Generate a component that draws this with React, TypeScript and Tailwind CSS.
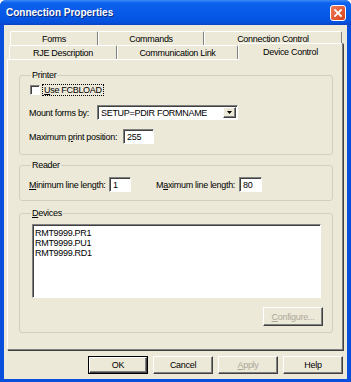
import React from 'react';

const sunken =
  'bg-white border border-t-[#808080] border-l-[#808080] border-b-white border-r-white shadow-[inset_1px_1px_0_#404040]';
const raised =
  'border border-t-white border-l-white border-b-[#404040] border-r-[#404040] shadow-[inset_-1px_-1px_0_#808080]';

const Button = ({ children, isDefault, disabled }: { children: React.ReactNode; isDefault?: boolean; disabled?: boolean }) => (
  <div className={`w-[60px] h-[18px] ${isDefault ? 'border border-black' : ''}`}>
    <div className={`w-full h-full bg-[#ECE9D8] ${raised} flex items-center justify-center ${disabled ? 'text-[#ACA899]' : 'text-black'}`}>
      {children}
    </div>
  </div>
);

const BackTab = ({ label, w }: { label: string; w: string }) => (
  <div className={`${w} h-full bg-[#ECE9D8] border-t border-l border-r border-t-white border-l-white border-r-[#808080] rounded-t-[2px] flex items-center justify-center whitespace-nowrap`}>
    {label}
  </div>
);

const App = () => {
  return (
    <div className="w-[351px] h-[382px] bg-[#0A4FDB] rounded-t-[6px] flex flex-col font-['Liberation_Sans',Arial,sans-serif] text-[9px] leading-[10px] text-black overflow-hidden">
      {/* title bar */}
      <div className="h-[25px] flex items-center justify-between pl-[6px] pr-[5px] bg-[linear-gradient(to_bottom,#3D8CF5_0%,#0B61EC_12%,#0558E6_60%,#0552DE_88%,#0A43C6_100%)]">
        <span className="text-white font-bold text-[10px] leading-[12px] [text-shadow:1px_1px_0_#0A2A80]">Connection Properties</span>
        <div className="w-[16px] h-[16px] rounded-[3px] border border-white bg-[linear-gradient(135deg,#EE7A58,#D9431C)] flex items-center justify-center">
          <svg width="8" height="8" viewBox="0 0 8 8">
            <path d="M1 1 L7 7 M7 1 L1 7" stroke="white" strokeWidth="1.8" strokeLinecap="square" />
          </svg>
        </div>
      </div>

      {/* client area */}
      <div className="mx-[4px] mb-[3px] flex-1 bg-[#ECE9D8] flex flex-col pt-[6px] tracking-[-0.3px]">
        {/* back tab row */}
        <div className="ml-[6px] h-[14px] flex">
          <BackTab label="Forms" w="w-[88px]" />
          <BackTab label="Commands" w="w-[106px]" />
          <BackTab label="Connection Control" w="w-[138px]" />
        </div>
        {/* front tab row */}
        <div className="ml-[5px] h-[14px] flex items-start relative z-10">
          <BackTab label="RJE Description" w="w-[108px]" />
          <BackTab label="Communication Link" w="w-[121px]" />
          <div className="w-[105px] h-[17px] -mt-[2px] -mb-[1px] bg-[#ECE9D8] border-t border-l border-r border-t-white border-l-white border-r-[#808080] shadow-[1px_0_0_#404040] rounded-t-[2px] flex items-start justify-center pt-[3px] whitespace-nowrap">
            Device Control
          </div>
        </div>

        {/* panel */}
        <div className="ml-[3px] w-[336px] h-[291px] border border-t-white border-l-white border-r-[#808080] border-b-[#808080] shadow-[1px_1px_0_#404040] pl-[11px] pt-[10px] whitespace-nowrap">
          <fieldset className="w-[314px] border border-[#D0D0BF] rounded-[3px] pl-[9px] pb-[10px]">
            <legend className="ml-[2px] px-[1px] leading-[10px]">Printer</legend>
            <div className="mt-[5px] h-[10px] flex items-center">
              <div className={`ml-[1px] w-[10px] h-[10px] shrink-0 ${sunken}`} />
              <span className="ml-[3px] px-[1px] outline outline-1 outline-dotted outline-black">
                <span className="underline">U</span>se FCBLOAD
              </span>
            </div>
            <div className="mt-[10px] h-[15px] flex items-center">
              <span className="w-[68px] shrink-0">Mount forms by:</span>
              <div className={`w-[141px] h-[15px] shrink-0 ${sunken} flex items-center justify-between pl-[3px] pr-[1px]`}>
                <span>SETUP=PDIR FORMNAME</span>
                <div className={`w-[13px] h-[11px] bg-[#ECE9D8] ${raised} flex items-center justify-center`}>
                  <svg width="5" height="3" viewBox="0 0 5 3">
                    <path d="M0 0 H5 L2.5 3 Z" fill="black" />
                  </svg>
                </div>
              </div>
            </div>
            <div className="mt-[9px] h-[15px] flex items-center">
              <span className="w-[94px] shrink-0">
                Maximum <span className="underline">p</span>rint position:
              </span>
              <div className={`w-[31px] h-[15px] shrink-0 ${sunken} flex items-center pl-[3px]`}>255</div>
            </div>
          </fieldset>

          <fieldset className="mt-[5px] w-[314px] border border-[#D0D0BF] rounded-[3px] pl-[9px] pb-[8px]">
            <legend className="ml-[2px] px-[1px] leading-[10px]">Reader</legend>
            <div className="mt-[7px] h-[15px] flex items-center">
              <span className="w-[80px] shrink-0">
                <span className="underline">M</span>inimum line length:
              </span>
              <div className={`w-[22px] h-[15px] shrink-0 ${sunken} flex items-center pl-[3px]`}>1</div>
              <span className="ml-[25px] w-[83px] shrink-0">
                M<span className="underline">a</span>ximum line length:
              </span>
              <div className={`w-[23px] h-[15px] shrink-0 ${sunken} flex items-center pl-[3px]`}>80</div>
            </div>
          </fieldset>

          <fieldset className="mt-[7px] w-[314px] border border-[#D0D0BF] rounded-[3px] pl-[12px] pr-[9px] pb-[6px]">
            <legend className="ml-[-1px] px-[1px] leading-[10px]">
              <span className="underline">D</span>evices
            </legend>
            <div className={`mt-[6px] w-[289px] h-[74px] ${sunken} pl-[2px] pt-[3px] flex flex-col`}>
              <span>RMT9999.PR1</span>
              <span>RMT9999.PU1</span>
              <span>RMT9999.RD1</span>
            </div>
            <div className="mt-[9px] flex justify-end">
              <div className={`w-[60px] h-[19px] bg-[#ECE9D8] ${raised} flex items-center justify-center text-[#ACA899]`}>
                <span>
                  <span className="underline">C</span>onfigure...
                </span>
              </div>
            </div>
          </fieldset>
        </div>

        {/* dialog buttons */}
        <div className="mt-[6px] flex justify-end gap-[5px] pr-[4px]">
          <Button isDefault>OK</Button>
          <Button>Cancel</Button>
          <Button disabled>
            <span>
              <span className="underline">A</span>pply
            </span>
          </Button>
          <Button>Help</Button>
        </div>
      </div>
    </div>
  );
};

export default App;
